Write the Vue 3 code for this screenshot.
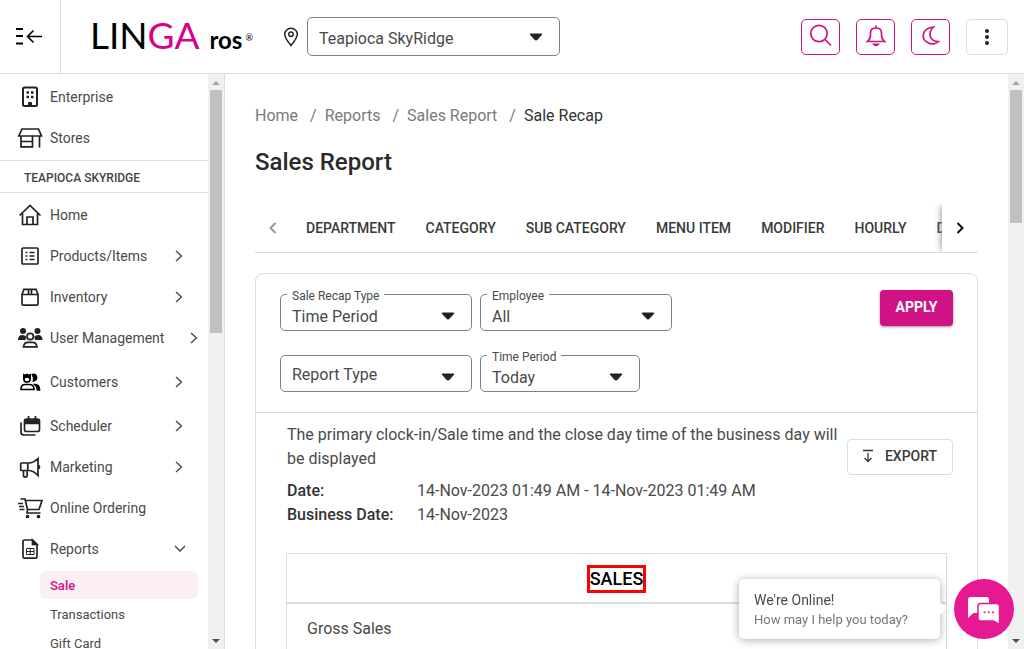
<script setup>
import { ref } from 'vue'

const location = ref('Teapioca SkyRidge')

const topItems = [
  { icon: 'building', label: 'Enterprise' },
  { icon: 'store', label: 'Stores' },
]

const items = [
  { icon: 'home', label: 'Home' },
  { icon: 'list', label: 'Products/Items', more: true },
  { icon: 'box', label: 'Inventory', more: true },
  { icon: 'users', label: 'User Management', more: true },
  { icon: 'customers', label: 'Customers', more: true, tall: true },
  { icon: 'calendar', label: 'Scheduler', more: true, tall: true },
  { icon: 'horn', label: 'Marketing', more: true },
  { icon: 'cart', label: 'Online Ordering' },
  { icon: 'report', label: 'Reports', open: true },
]

const subItems = ['Sale', 'Transactions', 'Gift Card']

const icons = {
  building:
    '<rect x="5" y="2.500" width="14" height="18.500" rx="1.500" stroke-width="2"/><path d="M10.500 21v-3.500h3v3.500z" fill="currentColor" stroke-width="1"/><path d="M8.500 7.500h2.500M13 7.500h2.500M8.500 12h2.500M13 12h2.500" stroke-width="2.500"/>',
  store:
    '<path d="M4 3h16.500l3 7H.8zM3 10v10.800h11.500V10M3 15.500h11.500M21.500 10v11.500"/>',
  home:
    '<path d="M1.500 12.500 12 2.500l10.500 10M4.500 10.500v11h15v-11M9 21.500v-7.500h6v7.500"/>',
  list:
    '<rect x="4" y="4" width="16" height="16" rx="1"/><path d="M7.500 8.500h2M7.500 12h2M7.500 15.500h2M11.500 8.500h5M11.500 12h5M11.500 15.500h5"/>',
  box:
    '<path d="M4 9.500V19q0 1.200 1.200 1.200h13.600Q20 20.200 20 19V9.500L18 4.300H6zM4 9.500h16M10.500 4.300v5M13.500 4.300v5"/>',
  users:
    '<g fill="currentColor" stroke="none"><circle cx="5" cy="5" r="3"/><circle cx="19.500" cy="5" r="3"/><path d="M0 14q0-5 4.500-5 2.500 0 3.600 1.500l-.6 3.500zM24.500 14q0-5-4.500-5-2.500 0-3.600 1.500l.6 3.500z"/></g><circle cx="12.200" cy="10.500" r="3.200"/><path d="M5.500 20.800q.6-4.500 4.500-4.500h4.500q3.900 0 4.500 4.500z"/>',
  customers:
    '<g color="#000"><path d="M6 7v2.500q0 2.500 3 2.500t3-2.500V7"/><path d="M5 3.500 7 4.500 9 3.500l2 1 2-1V9L9 7.800 5 9z" fill="currentColor" stroke="none"/><path d="M14.500 4.500q3.500-.8 4 2.500t-3 4q1-3-1-6.500zM17 14.500q4.500 0 4.500 5.500h-2q0-3.500-2.500-5.500z" fill="currentColor"/><path d="M3 19.500q0-5 4-5h4.500q4.500 0 4.500 5z"/></g>',
  calendar:
    '<rect x="6.500" y="5" width="15" height="12.500" rx="2"/><path d="M7 6h14v3.500H7z" fill="currentColor"/><path d="M10.500 2V6M17.500 2V6M3 8.500v9.500q0 3 3 3h11.500"/>',
  horn:
    '<path d="M3.500 8h7q5 0 9.500-4.500v17Q15.500 15.500 10.500 15.500h-7q-.8 0-.8-.8V8.800q0-.8.800-.8zM9.800 8v7.500M5.500 15.500V21q0 .8.800.8h2q.8 0 .8-.8v-5.500"/><path d="M20.500 10.500q2 1.500 0 3" fill="currentColor"/>',
  cart:
    '<path d="M2.500 3h4.500l2.500 10.500H21L24 4.500H7.500M9.500 13.500l-.5 3.500h13.500M0 7.500h5M1 10.500h5M1.500 13.500h5"/><circle cx="9.500" cy="20.500" r="1" fill="currentColor"/><circle cx="20.500" cy="20.500" r="1" fill="currentColor"/>',
  report:
    '<path d="M14.500 3H6.500Q5 3 5 4.500v15.200q0 1.500 1.500 1.500h11q1.500 0 1.500-1.500V7.500z"/><path d="M8.500 11.500h7.500v6H8.500zM12.200 11.500v6M8.500 14.500H16" stroke-width="1"/><path d="M14.500 3v4.500H19z" fill="currentColor"/>',
}

const crumbs = ['Home', 'Reports', 'Sales Report']
const tabs = ['DEPARTMENT', 'CATEGORY', 'SUB CATEGORY', 'MENU ITEM', 'MODIFIER', 'HOURLY', 'DISCOUNT']

const fields = [
  { id: 'recap', label: 'Sale Recap Type', value: 'Time Period' },
  { id: 'employee', label: 'Employee', value: 'All' },
  { id: 'report', label: '', value: 'Report Type' },
  { id: 'period', label: 'Time Period', value: 'Today', narrow: true },
]
</script>

<template>
  <div class="app">
    <header class="header">
      <button class="collapse" aria-label="Collapse menu">
        <svg width="28" height="20" viewBox="0 0 28 20" fill="none" stroke="#000" stroke-width="2">
          <path d="M1 2h7M1 9h7M1 16.500h7" />
          <path d="M12.500 9.500H27M18.500 3.500l-6 6 6 6" stroke-width="1.600" />
        </svg>
      </button>
      <a class="logo" href="#"><span class="lin">LIN</span><span class="ga">GA</span><span class="ros">ros</span><sup>®</sup></a>
      <svg class="pin" width="16" height="20" viewBox="0 0 16 20" fill="none" stroke="#222" stroke-width="1.500">
        <path d="M8 18.500Q1.700 11 1.700 7.300a6.300 6 0 0 1 12.600 0Q14.300 11 8 18.500z" />
        <circle cx="8" cy="7.200" r="2.200" />
      </svg>
      <div class="field location">
        <select v-model="location" aria-label="Location"><option>Teapioca SkyRidge</option></select>
        <svg class="caret" width="14" height="8" viewBox="0 0 14 8"><path d="M2 .5h10q2 0 .8 1.500L8.500 6.700q-1.500 1.500-3 0L1.200 2Q0 .5 2 .5z" fill="#222" /></svg>
      </div>
      <div class="actions">
        <button class="square" aria-label="Search">
          <svg width="24" height="24" viewBox="0 0 24 24"><circle cx="10" cy="9.500" r="8.200" /><path d="m16 15.500 6 6" /></svg>
        </button>
        <button class="square" aria-label="Notifications">
          <svg width="24" height="24" viewBox="0 0 24 24"><path d="M3.500 17.500h17Q17.500 15 17.500 11V9q0-5-5.500-5-5.500 0-5.500 5v2q0 4-3 6.500zM12 1.500v2" /><path d="M10 20.300h4q-2 2-4 0z" /></svg>
        </button>
        <button class="square" aria-label="Dark mode">
          <svg width="24" height="24" viewBox="0 0 24 24"><path d="M14.500 3C3 4 1.500 15 8.500 18.500c4 2.500 8.500 1.500 11-1C11 17.500 8 9.500 14.500 3z" /></svg>
        </button>
        <button class="square more" aria-label="More">
          <svg width="6" height="18" viewBox="0 0 6 18" class="dots"><circle cx="3" cy="3" r="2" /><circle cx="3" cy="9" r="2" /><circle cx="3" cy="15" r="2" /></svg>
        </button>
      </div>
    </header>

    <div class="body">
      <aside class="sidebar">
        <nav class="menu">
          <div class="group">
            <a v-for="item in topItems" :key="item.label" class="item" href="#">
              <svg class="icon" viewBox="0 0 24 24" v-html="icons[item.icon]" />
              <span>{{ item.label }}</span>
            </a>
          </div>
          <h2 class="section">TEAPIOCA SKYRIDGE</h2>
          <div class="group">
            <a v-for="item in items" :key="item.label" class="item" :class="{ tall: item.tall }" href="#">
              <svg class="icon" viewBox="0 0 24 24" v-html="icons[item.icon]" />
              <span class="name">{{ item.label }}</span>
              <svg v-if="item.more" class="chev" width="12" height="12" viewBox="0 0 12 12"><path d="m3 1 5.500 5L3 11" /></svg>
              <svg v-if="item.open" class="chev" width="12" height="12" viewBox="0 0 12 12"><path d="m2 3 5 5 5-5" /></svg>
            </a>
          </div>
          <div class="submenu">
            <a v-for="(name, i) in subItems" :key="name" href="#" :class="{ active: i === 0 }">{{ name }}</a>
          </div>
        </nav>
        <div class="scrollbar side" aria-hidden="true">
          <i class="up"></i><b class="thumb"></b><i class="down"></i>
        </div>
      </aside>

      <main class="main">
        <nav class="crumbs" aria-label="Breadcrumb">
          <template v-for="c in crumbs" :key="c"><a href="#">{{ c }}</a><span>/</span></template>
          <strong>Sale Recap</strong>
        </nav>
        <h1>Sales Report</h1>

        <div class="tabs">
          <button class="step" aria-label="Previous tabs" disabled>
            <svg width="12" height="14" viewBox="0 0 12 14"><path d="M8.500 2 3.500 7l5 5" /></svg>
          </button>
          <div class="strip"><button v-for="t in tabs" :key="t">{{ t }}</button></div>
          <button class="step next" aria-label="Next tabs">
            <svg width="12" height="14" viewBox="0 0 12 14"><path d="m3.500 2 5 5-5 5" /></svg>
          </button>
        </div>

        <section class="card">
          <form class="filters" @submit.prevent>
            <div class="fields">
              <div v-for="f in fields" :key="f.id" class="field" :class="{ narrow: f.narrow, labelled: f.label }">
                <label v-if="f.label" :for="f.id">{{ f.label }}</label>
                <select :id="f.id" :aria-label="f.label || f.value"><option>{{ f.value }}</option></select>
                <svg class="caret" width="14" height="8" viewBox="0 0 14 8"><path d="M2 .5h10q2 0 .8 1.500L8.500 6.700q-1.500 1.500-3 0L1.200 2Q0 .5 2 .5z" fill="#222" /></svg>
              </div>
            </div>
            <button class="apply">APPLY</button>
          </form>

          <div class="info">
            <div class="details">
              <p>The primary clock-in/Sale time and the close day time of the business day will be displayed</p>
              <dl>
                <dt>Date:</dt><dd>14-Nov-2023 01:49 AM - 14-Nov-2023 01:49 AM</dd>
                <dt>Business Date:</dt><dd>14-Nov-2023</dd>
              </dl>
            </div>
            <button class="export">
              <svg width="14" height="14" viewBox="0 0 14 14"><path d="M2 1.500h10M7 4v8.500M3.500 9 7 12.500 10.500 9" /></svg>
              EXPORT
            </button>
          </div>

          <table class="report">
            <thead><tr><th colspan="2"><span class="mark">SALES</span></th></tr></thead>
            <tbody><tr><td>Gross Sales</td><td></td></tr></tbody>
          </table>
        </section>
      </main>
      <div class="scrollbar page" aria-hidden="true">
        <i class="up"></i><b class="thumb"></b><i class="down"></i>
      </div>
    </div>

    <div class="chat">
      <div class="bubble"><p>We're Online!</p><p class="sub">How may I help you today?</p></div>
      <button class="chat-button" aria-label="Open chat">
        <svg width="34" height="30" viewBox="0 0 34 30">
          <path d="M3.500 1h16Q22 1 22 3.500V17H6.500L1 22V3.500Q1 1 3.500 1z" fill="#fff" />
          <path d="M13.500 7.500h16.500q2.500 0 2.500 2.500v18.500L26.500 25h-13q-2.500 0-2.500-2.500V10q0-2.500 2.500-2.500z" fill="#fff" stroke="#e51a92" stroke-width="1.500" />
          <g fill="#e51a92"><circle cx="17.500" cy="16.300" r="1" /><circle cx="21.700" cy="16.300" r="1" /><circle cx="26" cy="16.300" r="1" /></g>
        </svg>
      </button>
    </div>
  </div>
</template>

<style>
body {
  margin: 0;
  overflow: hidden;
}
</style>

<style scoped>
* {
  box-sizing: border-box;
}
.app {
  display: flex;
  flex-direction: column;
  height: 100vh;
  background: #fff;
  color: #4a4a4a;
  font: 400 16px/24px Roboto, "Liberation Sans", sans-serif;
}
a {
  color: inherit;
  text-decoration: none;
}
button,
select {
  font: inherit;
  color: inherit;
  margin: 0;
  padding: 0;
  border: 0;
  background: none;
}
h1,
h2,
p,
dl,
dd {
  margin: 0;
}
svg {
  display: block;
  flex: none;
}
.header {
  display: flex;
  align-items: center;
  flex: none;
  height: 74px;
  border-bottom: 1px solid #dcdcdc;
}
.collapse {
  display: flex;
  align-items: center;
  justify-content: center;
  width: 61px;
  height: 100%;
  padding-right: 3px;
  border-right: 1px solid #dcdcdc;
}
.logo {
  display: flex;
  align-items: baseline;
  width: 163px;
  margin: 2px 30px 0 29px;
  font-family: Lato, sans-serif;
  font-size: 37px;
  font-weight: 400;
  line-height: 40px;
  color: #000;
}
.ga {
  color: #d9008b;
}
.ros {
  margin-left: 10px;
  font-size: 24px;
  font-weight: 700;
}
sup {
  align-self: center;
  margin-left: 3px;
  font-size: 9px;
  line-height: 10px;
}
.pin {
  margin-right: 8px;
}
.field {
  position: relative;
  width: 192px;
  height: 37px;
}
.field select {
  width: 100%;
  height: 100%;
  padding: 2px 32px 0 11px;
  border: 1px solid #7a7f8a;
  border-radius: 5px;
  appearance: none;
  background: #fff;
}
.field.labelled select {
  padding-top: 8px;
}
.field label {
  position: absolute;
  top: -6px;
  left: 7px;
  padding: 0 5px;
  background: #fff;
  font-size: 12px;
  line-height: 16px;
}
.caret {
  position: absolute;
  right: 17px;
  bottom: 11px;
  pointer-events: none;
}
.field.narrow {
  width: 160px;
}
.field.location {
  width: 253px;
  height: 39px;
}
.location select {
  padding-top: 4px;
}
.location .caret {
  bottom: 15px;
}
.actions {
  display: flex;
  gap: 16px;
  margin: 0 16px 0 auto;
}
.square {
  display: flex;
  align-items: center;
  justify-content: center;
  width: 39px;
  height: 36px;
  padding-bottom: 2px;
  border: 1px solid #d11287;
  border-radius: 5px;
}
.square svg {
  fill: none;
  stroke: #d11287;
  stroke-width: 1.7;
}
.square.more {
  width: 42px;
  padding: 0;
  border-color: #dcdcdc;
}
.square .dots {
  fill: #222;
  stroke: none;
}
.body {
  display: flex;
  flex: 1;
  min-height: 0;
}
.sidebar {
  display: flex;
  flex: none;
  width: 225px;
  border-right: 1px solid #dcdcdc;
  overflow: hidden;
}
.menu {
  flex: 1;
  min-width: 0;
}
.group {
  padding-top: 2px;
}
.section + .group {
  padding-top: 1px;
}
.item {
  display: flex;
  align-items: center;
  height: 41px;
  padding-left: 18px;
  font-size: 14px;
  white-space: nowrap;
}
.item.tall {
  height: 44px;
  padding-top: 3px;
}
.icon {
  width: 24px;
  height: 24px;
  margin-right: 8px;
  fill: none;
  stroke: currentColor;
  stroke-width: 1.7;
  color: #222;
  overflow: visible;
}
.name {
  min-width: 99px;
  margin-right: 24px;
}
.chev {
  fill: none;
  stroke: #444;
  stroke-width: 1.3;
}
.section {
  padding: 3px 24px 0;
  margin-top: 2px;
  border: solid #dcdcdc;
  border-width: 1px 0;
  font-size: 12px;
  font-weight: 500;
  line-height: 28px;
  color: #444;
}
.submenu {
  display: flex;
  flex-direction: column;
  gap: 1px;
  padding: 2px 10px 0 40px;
}
.submenu a {
  height: 28px;
  padding: 0 10px;
  border-radius: 6px;
  font-size: 13px;
  line-height: 29px;
}
.submenu .active {
  background: #fbeff5;
  font-weight: 500;
  color: #d11287;
}
.scrollbar {
  display: flex;
  flex-direction: column;
  flex: none;
  width: 16px;
  background: #f1f1f1;
}
.scrollbar i {
  width: 0;
  height: 0;
  margin: 7px auto 5px;
  border: 4px solid transparent;
  border-top: 0;
  border-bottom-color: #a3a3a3;
}
.scrollbar .down {
  margin: auto auto 6px;
  border: 4px solid transparent;
  border-bottom: 0;
  border-top-color: #505050;
}
.thumb {
  height: 243px;
  margin: 0 2px;
  background: #c1c1c1;
}
.page .thumb {
  height: 133px;
}
.main {
  flex: 1;
  min-width: 0;
  padding: 30px 30px 0;
  overflow: hidden;
}
.crumbs {
  display: flex;
  color: #7a7a7a;
}
.crumbs span {
  margin: 0 8px 0 12px;
}
.crumbs strong {
  font-weight: 400;
  color: #333;
}
h1 {
  margin-top: 18px;
  font-size: 24px;
  font-weight: 500;
  line-height: 32px;
  color: #2a2a2a;
}
.tabs {
  display: flex;
  height: 49px;
  margin-top: 26px;
  border-bottom: 1px solid #dcdcdc;
}
.strip {
  display: flex;
  flex: 1;
  min-width: 0;
  overflow: hidden;
}
.strip button {
  flex: none;
  padding: 0 15px;
  font-size: 14px;
  font-weight: 500;
  color: #3a3a3a;
}
.step {
  display: flex;
  align-items: center;
  justify-content: center;
  flex: none;
  width: 36px;
}
.step svg {
  fill: none;
  stroke: #999;
  stroke-width: 2;
}
.next {
  z-index: 1;
  background: #fff;
  box-shadow: -3px 0 6px -2px #999;
  clip-path: inset(0 0 0 -10px);
}
.next svg {
  stroke: #111;
}
.card {
  margin-top: 20px;
  border: 1px solid #dcdcdc;
  border-radius: 8px 8px 0 0;
}
.filters {
  display: flex;
  align-items: flex-start;
  justify-content: space-between;
  padding: 16px 24px 20px;
  border-bottom: 1px solid #dcdcdc;
}
.fields {
  display: grid;
  grid-template-columns: 192px 192px;
  gap: 24px 8px;
  margin-top: 4px;
}
.apply {
  width: 73px;
  height: 36px;
  padding-bottom: 2px;
  border-radius: 4px;
  background: #d11287;
  box-shadow: 0 1px 3px #0006;
  font-size: 14px;
  font-weight: 700;
  color: #fff;
}
.info {
  display: flex;
  align-items: flex-start;
  gap: 8px;
  padding: 10px 24px 26px 31px;
}
.details {
  flex: 1;
}
dl {
  display: grid;
  grid-template-columns: 130px 1fr;
  margin-top: 8px;
}
dt {
  font-weight: 500;
  color: #333;
}
.export {
  display: flex;
  align-items: center;
  justify-content: center;
  gap: 10px;
  flex: none;
  width: 106px;
  height: 36px;
  padding: 0 2px 2px 0;
  margin-top: 16px;
  border: 1px solid #dcdcdc;
  border-radius: 4px;
  font-size: 14px;
  font-weight: 500;
  color: #3a3a3a;
}
.export svg {
  fill: none;
  stroke: #333;
  stroke-width: 1.3;
}
.report {
  width: calc(100% - 60px);
  margin: 0 30px;
  border: 1px solid #dcdcdc;
  border-spacing: 0;
}
th {
  height: 50px;
  padding: 2px 0 0;
  border-bottom: 2px solid #dcdcdc;
  font-size: 18px;
  font-weight: 500;
  color: #000;
}
.mark {
  display: inline-block;
  border: 3px solid #f00;
  line-height: 22px;
}
td {
  height: 50px;
  padding: 0 20px;
}
.chat {
  position: fixed;
  right: 10px;
  bottom: 10px;
  display: flex;
  gap: 14px;
}
.bubble {
  position: relative;
  width: 201px;
  height: 60px;
  padding: 12px 15px;
  border-radius: 5px;
  background: #fff;
  box-shadow: 0 1px 8px #0005;
  font-size: 14px;
  line-height: 19px;
}
.bubble::after {
  content: "";
  position: absolute;
  top: 25px;
  right: -5px;
  width: 9px;
  height: 9px;
  background: #fff;
  transform: rotate(45deg);
}
.bubble .sub {
  font-size: 13px;
  color: #777;
}
.chat-button {
  display: flex;
  align-items: center;
  justify-content: center;
  width: 60px;
  height: 60px;
  padding-top: 4px;
  border-radius: 50%;
  background: #e51a92;
}
</style>
